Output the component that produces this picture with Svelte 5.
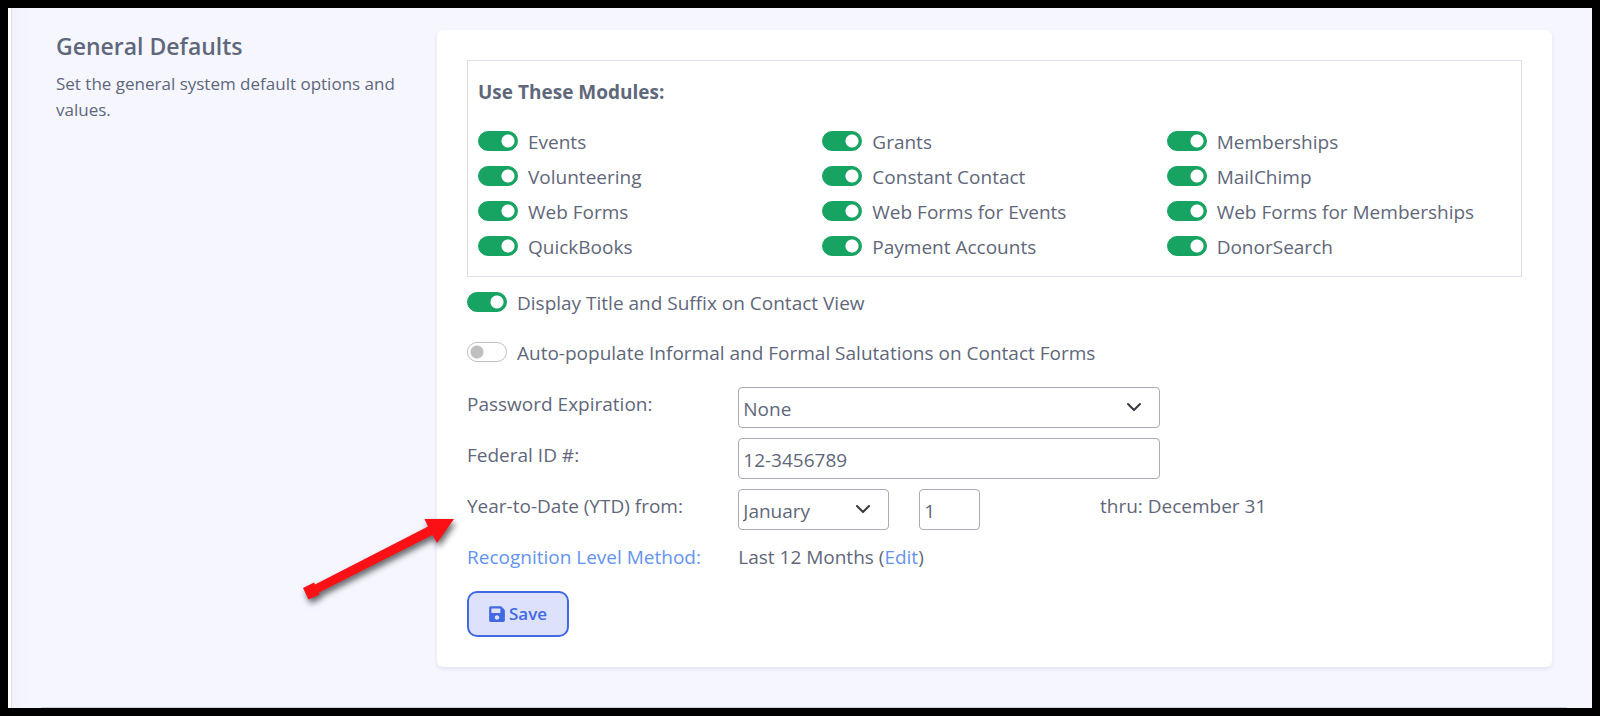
<script>
  const modules = $state([
    { name: "Events", on: true },
    { name: "Grants", on: true },
    { name: "Memberships", on: true },
    { name: "Volunteering", on: true },
    { name: "Constant Contact", on: true },
    { name: "MailChimp", on: true },
    { name: "Web Forms", on: true },
    { name: "Web Forms for Events", on: true },
    { name: "Web Forms for Memberships", on: true },
    { name: "QuickBooks", on: true },
    { name: "Payment Accounts", on: true },
    { name: "DonorSearch", on: true },
  ]);

  let displayTitle = $state(true);
  let autoPopulate = $state(false);
  let expiration = $state("None");
  let federalId = $state("12-3456789");
  let month = $state("January");
  let day = $state("1");
</script>

{#snippet chevron()}
  <svg class="chevron" viewBox="0 0 16 16" aria-hidden="true">
    <path d="M2 5l6 6 6-6" />
  </svg>
{/snippet}

<main class="page">
  <div class="settings">
    <header class="intro">
      <h1>General Defaults</h1>
      <p>Set the general system default options and values.</p>
    </header>

    <form class="card" onsubmit={(e) => e.preventDefault()}>
      <section class="modules">
        <h2>Use These Modules:</h2>
        <div class="module-grid">
          {#each modules as mod}
            <label class="toggle">
              <input type="checkbox" bind:checked={mod.on} />
              <span>{mod.name}</span>
            </label>
          {/each}
        </div>
      </section>

      <label class="toggle option">
        <input type="checkbox" bind:checked={displayTitle} />
        <span>Display Title and Suffix on Contact View</span>
      </label>
      <label class="toggle option">
        <input type="checkbox" bind:checked={autoPopulate} />
        <span>Auto-populate Informal and Formal Salutations on Contact Forms</span>
      </label>

      <div class="fields">
        <div class="row">
          <label for="expiration">Password Expiration:</label>
          <div class="select">
            <select id="expiration" bind:value={expiration}>
              <option>None</option>
              <option>30 Days</option>
              <option>90 Days</option>
            </select>
            {@render chevron()}
          </div>
        </div>

        <div class="row">
          <label for="federal-id">Federal ID #:</label>
          <input id="federal-id" type="text" bind:value={federalId} />
        </div>

        <div class="row">
          <label for="ytd-month">Year-to-Date (YTD) from:</label>
          <div class="ytd">
            <div class="select month">
              <select id="ytd-month" bind:value={month}>
                <option>January</option>
                <option>April</option>
                <option>July</option>
                <option>October</option>
              </select>
              {@render chevron()}
            </div>
            <input class="day" type="text" aria-label="Day" bind:value={day} />
            <span class="text">thru: December 31</span>
          </div>
          <svg class="arrow" viewBox="0 0 170 100" aria-hidden="true">
            <path d="M157 10L127.500 10L131 17.500L18 75.500L17 73.500L6 79L11.500 90.500L22.500 85.500L22 83.500L135.500 26L140 34Z" />
          </svg>
        </div>

        <div class="row">
          <a class="text" href="#recognition">Recognition Level Method:</a>
          <span class="text">Last 12 Months (<a href="#edit">Edit</a>)</span>
        </div>
      </div>

      <button class="save" type="submit">
        <svg viewBox="0 0 448 512" aria-hidden="true">
          <path
            d="M433.941 129.941l-83.882-83.882A48 48 0 0 0 316.118 32H48C21.490 32 0 53.490 0 80v352c0 26.510 21.490 48 48 48h352c26.510 0 48-21.490 48-48V163.882a48 48 0 0 0-14.059-33.941zM224 416c-35.346 0-64-28.654-64-64 0-35.346 28.654-64 64-64s64 28.654 64 64c0 35.346-28.654 64-64 64zm96-304.520V212c0 6.627-5.373 12-12 12H76c-6.627 0-12-5.373-12-12V108c0-6.627 5.373-12 12-12h228.520c3.183 0 6.235 1.264 8.485 3.515l3.480 3.480A11.996 11.996 0 0 1 320 111.480z"
          />
        </svg>
        Save
      </button>
    </form>
  </div>
  <hr />
</main>

<style>
  :global(body) {
    background: #000;
  }
  .page {
    box-sizing: border-box;
    min-height: 100vh;
    display: flex;
    flex-direction: column;
    justify-content: space-between;
    border: 8px solid #000;
    background: linear-gradient(
      to right,
      #fff 3px,
      #dfe0e6 3px,
      #dfe0e6 4px,
      #f0f1f9 4px,
      #f5f6ff 22px
    );
    color: #5f677a;
    font-family: "Segoe UI", "Open Sans", "Noto Sans", sans-serif;
    font-size: 19px;
    line-height: 30px;
  }
  .settings {
    display: grid;
    grid-template-columns: 351px 1fr;
    gap: 30px;
    align-items: start;
    padding: 22px 40px 20px 48px;
  }
  h1 {
    margin: 0;
    font-size: 23px;
    font-weight: 600;
    line-height: 32px;
  }
  .intro p {
    margin: 9px 0 0;
    font-size: 17px;
    line-height: 26px;
  }
  .card {
    padding: 30px;
    border-radius: 6px;
    background: #fff;
    box-shadow: 0 2px 4px rgba(60, 60, 90, 0.1);
  }
  .modules {
    padding: 16px 10px 13px;
    border: 1px solid #dddfe5;
  }
  h2 {
    margin: 0 0 16px;
    font-size: 19px;
    font-weight: 700;
    line-height: 30px;
  }
  .module-grid {
    display: grid;
    grid-template-columns: repeat(3, 1fr);
  }
  .toggle {
    display: flex;
    align-items: center;
    gap: 10px;
    height: 35px;
  }
  .toggle.option {
    height: 50px;
  }
  .toggle span {
    padding-top: 2px;
  }
  .toggle input {
    appearance: none;
    box-sizing: border-box;
    flex: none;
    width: 40px;
    height: 20px;
    margin: 0;
    border: 1px solid #bfbfbf;
    border-radius: 10px;
    background: radial-gradient(circle at 9px 9px, #bfbfbf 6px, #fff 7px);
  }
  .toggle input:checked {
    border-color: #17a362;
    background: radial-gradient(circle at 29px 9px, #fff 6px, #17a362 7px);
  }
  .fields {
    padding-top: 10px;
  }
  .row {
    position: relative;
    display: grid;
    grid-template-columns: 9fr 14fr 12fr;
    align-items: start;
    margin-bottom: 10px;
  }
  .row > label,
  .text {
    height: 41px;
    line-height: 34px;
  }
  .ytd {
    grid-column: 2 / 4;
    display: grid;
    grid-template-columns: 3fr 3fr 7fr;
  }
  .select {
    position: relative;
  }
  select,
  input[type="text"] {
    appearance: none;
    display: block;
    box-sizing: border-box;
    width: 100%;
    height: 41px;
    margin: 0;
    padding: 2px 4px 0;
    border: 1px solid #a9abb6;
    border-radius: 4px;
    background: #fff;
    color: inherit;
    font: inherit;
  }
  .select.month {
    width: 151px;
  }
  input.day {
    width: 61px;
  }
  .chevron {
    position: absolute;
    top: 12px;
    right: 18px;
    width: 16px;
    height: 16px;
    fill: none;
    stroke: #343a40;
    stroke-width: 2;
    stroke-linecap: round;
    stroke-linejoin: round;
    pointer-events: none;
  }
  .arrow {
    position: absolute;
    top: 20px;
    left: -170px;
    width: 170px;
    height: 100px;
    fill: #fb1016;
    filter: drop-shadow(2px 4px 3px rgba(0, 0, 0, 0.6));
    pointer-events: none;
  }
  a {
    color: #6493f0;
    text-decoration: none;
  }
  .save {
    display: flex;
    align-items: center;
    gap: 4px;
    height: 46px;
    padding: 0 20px;
    border: 2px solid #4169e1;
    border-radius: 10px;
    background: #dde1fc;
    color: #4169e1;
    font: inherit;
    font-size: 17px;
    font-weight: 600;
  }
  .save svg {
    width: 16px;
    height: 18px;
    fill: currentColor;
  }
  hr {
    width: auto;
    height: 1px;
    margin: 0 25px 0 33px;
    border: 0;
    background: #cdcfdb;
  }
</style>
